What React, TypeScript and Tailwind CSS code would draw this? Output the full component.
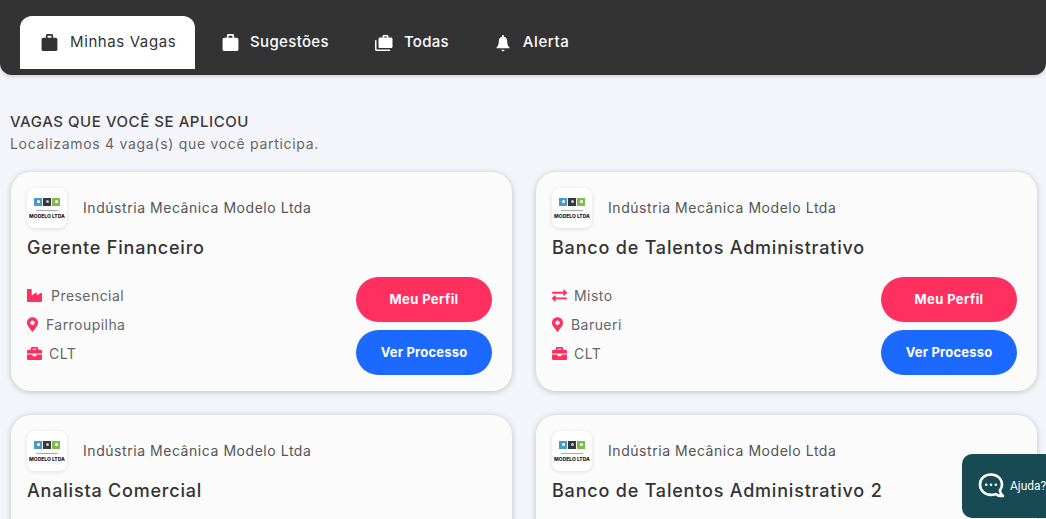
import React from "react";
import { FaBriefcase, FaIndustry, FaMapMarkerAlt, FaExchangeAlt } from "react-icons/fa";

type Vaga = {
  titulo: string;
  modo: string;
  cidade: string;
};

const vagas: Vaga[] = [
  { titulo: "Gerente Financeiro", modo: "Presencial", cidade: "Farroupilha" },
  { titulo: "Banco de Talentos Administrativo", modo: "Misto", cidade: "Barueri" },
  { titulo: "Analista Comercial", modo: "Presencial", cidade: "Farroupilha" },
  { titulo: "Banco de Talentos Administrativo 2", modo: "Misto", cidade: "Barueri" },
];

const BagIcon = () => (
  <svg viewBox="0 0 18 18" className="h-[19px] w-[19px] shrink-0" fill="currentColor">
    <path
      fillRule="evenodd"
      d="M5.6 4.6V2.4C5.6 1.6 6.2 1 7 1h4c.8 0 1.4.6 1.4 1.4v2.2h2.4c1 0 1.7.8 1.7 1.7v9c0 1-.8 1.7-1.7 1.7H3.2c-1 0-1.7-.8-1.7-1.7v-9c0-1 .8-1.7 1.7-1.7h2.4zM7.2 2.6v2h3.6v-2H7.2z"
    />
  </svg>
);

const BagsIcon = () => (
  <svg viewBox="0 0 20 18" className="h-[18px] w-[20px] shrink-0" fill="currentColor">
    <path
      fillRule="evenodd"
      d="M8.6 3.6V2.2C8.6 1.5 9.1 1 9.8 1h3.4c.7 0 1.2.5 1.2 1.2v1.4h2.5c1 0 1.6.7 1.6 1.6v7.2c0 1-.7 1.6-1.6 1.6H6.100c-1 0-1.6-.7-1.600-1.600V5.200c0-1 .7-1.600 1.600-1.600h2.500zM10 2.400v1.200h3V2.400h-3z"
    />
    <path d="M1 6.200h1.500v9.300h13.600V17H2.500C1.700 17 1 16.300 1 15.500V6.200z" />
  </svg>
);

const BellIcon = () => (
  <svg viewBox="0 0 14 18" className="h-[18px] w-[14px] shrink-0" fill="currentColor">
    <path d="M7 1c.6 0 1 .4 1 1v.7c2.100.5 3.200 2.300 3.200 4.500 0 3.300.7 4.400 2.300 6.300v.8H.5v-.8c1.600-1.900 2.300-3 2.300-6.300C2.800 5 3.900 3.200 6 2.700V2c0-.6.4-1 1-1z" />
    <path d="M5.400 15.800h3.200c0 .9-.7 1.500-1.600 1.500s-1.600-.6-1.600-1.500z" />
  </svg>
);

const ChatIcon = () => (
  <svg viewBox="0 0 28 28" className="h-[28px] w-[28px] shrink-0" fill="none">
    <path
      d="M13 2.500c6.300 0 11 4.300 11 10 0 2.400-.8 4.500-2.200 6.200.2 1.700 1.200 3.400 3.200 5.300-2.800.2-5.400-.5-7.300-1.900-1.400.5-3 .8-4.700.8-6.300 0-11-4.600-11-10.400s4.700-10 11-10z"
      stroke="white"
      strokeWidth="2.600"
      strokeLinejoin="round"
    />
    <circle cx="8.200" cy="12.800" r="1.300" fill="white" />
    <circle cx="13" cy="12.800" r="1.300" fill="white" />
    <circle cx="17.800" cy="12.800" r="1.300" fill="white" />
  </svg>
);

const Logo = () => (
  <div className="flex h-10 w-10 shrink-0 flex-col items-center justify-center rounded-lg bg-white shadow-[0_1px_4px_rgba(0,0,0,0.12)]">
    <div className="flex gap-px">
      <span className="flex h-[8px] w-[8px] items-center justify-center bg-[#4a9bc4]">
        <span className="h-[3px] w-[3px] rounded-full bg-white" />
      </span>
      <span className="flex h-[8px] w-[8px] items-center justify-center bg-[#33393d]">
        <span className="h-[3px] w-[3px] rounded-full bg-[#cccccc]" />
      </span>
      <span className="flex h-[8px] w-[8px] items-center justify-center bg-[#7dbb4a]">
        <span className="h-[3px] w-[3px] rounded-full bg-white" />
      </span>
    </div>
    <span className="mt-[4px] h-px w-[22px] bg-[#aaaaaa]" />
    <span className="mt-[3px] whitespace-nowrap text-[5px] font-extrabold leading-[5px] text-[#222222]">MODELO LTDA</span>
  </div>
);

const Card = ({ vaga }: { vaga: Vaga }) => (
  <div className="h-[219px] rounded-[20px] bg-[#fbfbfc] px-4 pt-4 shadow-[0_1px_6px_rgba(0,0,0,0.22)]">
    <div className="flex items-center gap-4">
      <Logo />
      <span className="pb-[2px] text-[14px] tracking-[0.55px] text-[#555555]">Indústria Mecânica Modelo Ltda</span>
    </div>
    <h2 className="mt-[7px] text-[18px] font-medium leading-[26px] tracking-[0.8px] text-[#333333]">{vaga.titulo}</h2>
    <div className="mt-[16px] flex items-start justify-between pr-[4px]">
      <div className="flex flex-col gap-[8px] pt-[8px] text-[14px] leading-[21px] tracking-[0.45px] text-[#666666]">
        <div className="flex h-[21px] items-center">
          {vaga.modo === "Misto" ? (
            <FaExchangeAlt className="mr-[7px] text-[15px] text-[#ff305f]" />
          ) : (
            <FaIndustry className="mr-[9px] text-[15px] text-[#ff305f]" />
          )}
          {vaga.modo}
        </div>
        <div className="flex h-[21px] items-center">
          <FaMapMarkerAlt className="mr-[8px] h-[15px] w-[11px] text-[#ff305f]" />
          {vaga.cidade}
        </div>
        <div className="flex h-[21px] items-center">
          <FaBriefcase className="mr-[7px] text-[15px] text-[#ff305f]" />
          CLT
        </div>
      </div>
      <div className="flex w-[136px] flex-col gap-[8px]">
        <button className="h-[45px] rounded-full bg-[#ff305f] text-[13px] font-bold tracking-[0.4px] text-white">Meu Perfil</button>
        <button className="h-[45px] rounded-full bg-[#1c69ff] text-[13px] font-bold tracking-[0.2px] text-white">Ver Processo</button>
      </div>
    </div>
  </div>
);

export default function App() {
  return (
    <div className="relative h-[519px] overflow-hidden bg-[#f4f5fa] font-['Inter',sans-serif]">
      <header className="flex h-[75px] items-start rounded-b-[12px] bg-[#333333] pl-5 pt-4 shadow-[0_1px_4px_rgba(0,0,0,0.2)]">
        <div className="flex h-[53px] w-[175px] items-center gap-[11px] rounded-t-[12px] bg-white pl-[20px] text-[15px] tracking-[0.6px] text-[#333333]">
          <BagIcon />
          Minhas Vagas
        </div>
        <nav className="flex h-[53px] items-center pl-[26px] text-[15px] font-medium text-white">
          <div className="flex items-center gap-[10px] tracking-[0.35px]">
            <BagIcon />
            Sugestões
          </div>
          <div className="ml-[45px] flex items-center gap-[10px] tracking-[0.25px]">
            <BagsIcon />
            Todas
          </div>
          <div className="ml-[47px] flex items-center gap-[13px] tracking-[0.6px]">
            <BellIcon />
            Alerta
          </div>
        </nav>
      </header>

      <main className="pl-[10px] pt-[38px]">
        <h1 className="text-[15px] font-medium leading-[18px] tracking-[0.55px] text-[#3a3a3a]">VAGAS QUE VOCÊ SE APLICOU</h1>
        <p className="mt-[2px] text-[14px] leading-[21px] tracking-[0.7px] text-[#666666]">Localizamos 4 vaga(s) que você participa.</p>
        <div className="ml-px mt-[18px] grid w-[1026px] grid-cols-2 gap-[24px]">
          {vagas.map((vaga) => (
            <Card key={vaga.titulo} vaga={vaga} />
          ))}
        </div>
      </main>

      <div className="absolute bottom-px right-0 flex h-[64px] w-[84px] items-center gap-[4px] rounded-l-[10px] bg-[#174a52] pl-4 text-[12px] text-white">
        <ChatIcon />
        <span className="font-['Roboto',sans-serif]">Ajuda?</span>
      </div>
    </div>
  );
}
